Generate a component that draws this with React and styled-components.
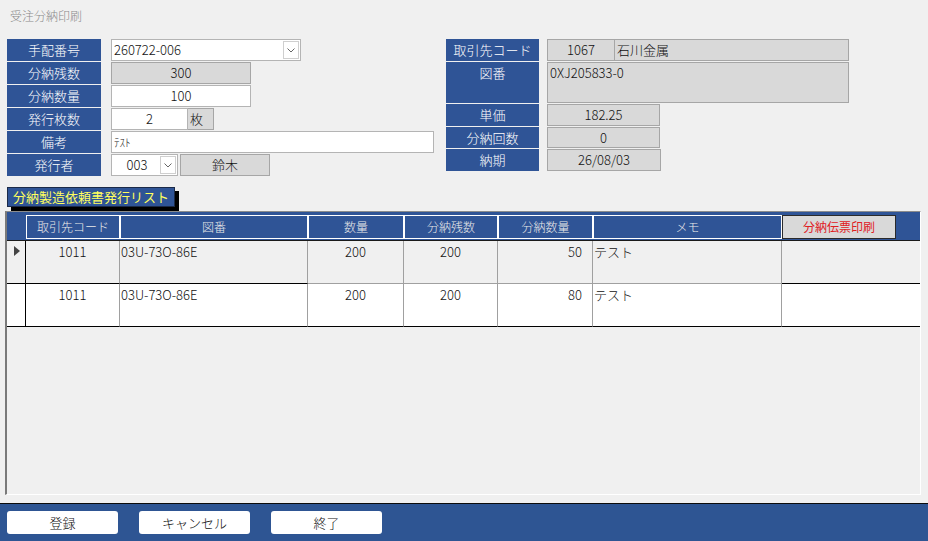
import styled, { createGlobalStyle } from "styled-components";

const GlobalStyle = createGlobalStyle`
  html, body {
    margin: 0;
    padding: 0;
    background: #f0f0f0;
  }
  * {
    box-sizing: border-box;
  }
`;

const BLUE = "#2f5496";

const Page = styled.div`
  width: 928px;
  height: 541px;
  display: flex;
  flex-direction: column;
  background: #f0f0f0;
  font-family: "Noto Sans CJK JP", "Noto Sans", sans-serif;
  font-weight: 300;
  font-size: 13px;
  color: #111;
  overflow: hidden;
`;

const Title = styled.div`
  height: 39px;
  padding: 8px 0 0 10px;
  font-size: 12px;
  line-height: 16px;
  color: #8a8a8a;
`;

const FormArea = styled.div`
  display: flex;
  align-items: flex-start;
  gap: 12px;
  padding-left: 7px;
`;

const FieldList = styled.div`
  display: flex;
  flex-direction: column;
  gap: 1px;
  width: ${(p) => p.$w}px;
`;

const Row = styled.div`
  display: flex;
  height: ${(p) => p.$h || 22}px;
`;

const Label = styled.div`
  width: ${(p) => p.$w || 94}px;
  margin-right: ${(p) => p.$gap || 10}px;
  flex-shrink: 0;
  background: ${BLUE};
  color: #fff;
  text-align: center;
  line-height: 22px;
`;

const Field = styled.div`
  width: ${(p) => p.$w}px;
  margin-left: ${(p) => p.$ml || 0}px;
  height: 100%;
  display: flex;
  align-items: ${(p) => (p.$top ? "flex-start" : "center")};
  justify-content: ${(p) =>
    p.$align === "left" ? "flex-start" : p.$align === "right" ? "flex-end" : "center"};
  padding: 0 2px;
  background: ${(p) => (p.$gray ? "#d9d9d9" : "#fff")};
  border: 1px solid ${(p) => (p.$gray ? "#a6a6a6" : "#b4b4b4")};
  border-left-width: ${(p) => (p.$joined ? 0 : 1)}px;
  font-size: ${(p) => p.$fs || 13}px;
  line-height: 20px;
  white-space: nowrap;
`;

const ComboText = styled.span`
  flex: 1;
  text-align: ${(p) => p.$align || "left"};
`;

const ArrowBox = styled.span`
  width: 16px;
  height: 18px;
  display: flex;
  align-items: center;
  justify-content: center;
  border: 1px solid #cfcfcf;
  background: #fff;
  margin-right: -1px;
`;

const Chevron = () => (
  <svg width="8" height="5" viewBox="0 0 8 5">
    <polyline points="0.5,0.5 4,4 7.5,0.5" fill="none" stroke="#666" strokeWidth="1" />
  </svg>
);

const SectionTag = styled.div`
  align-self: flex-start;
  margin: 11px 0 4px 7px;
  width: 168px;
  height: 20px;
  background: ${BLUE};
  border: 1px solid #1b2a48;
  box-shadow: 4px 4px 0 #000;
  color: #ffff5e;
  font-size: 13px;
  font-weight: 400;
  line-height: 18px;
  text-align: center;
  white-space: nowrap;
`;

const Sheet = styled.div`
  margin-left: 5px;
  width: 916px;
  height: 284px;
  background: #f0f0f0;
  border-top: 1px solid #8c8c8c;
  border-left: 2px solid #7a7a7a;
  border-right: 1px solid #fff;
  border-bottom: 1px solid #fff;
`;

const COLS = "19px 94px 188px 96px 94px 95px 189px 138px";

const HeadBand = styled.div`
  display: grid;
  grid-template-columns: ${COLS};
  height: 29px;
  background: ${BLUE};
  border-bottom: 1px solid #1a1a1a;
`;

const HeadCell = styled.div`
  margin: 3px 0 1px;
  border: 1px solid #fff;
  color: #eaeaea;
  font-size: 12px;
  line-height: 21px;
  text-align: center;
`;

const PrintButton = styled.div`
  margin: 3px 24px 1px 0;
  background: #d9d9d9;
  border: 1px solid #2a2a2a;
  color: #e0201f;
  font-size: 12px;
  font-weight: 400;
  line-height: 21px;
  text-align: center;
`;

const DataRow = styled.div`
  display: grid;
  grid-template-columns: ${COLS};
  height: 43px;
  background: ${(p) => (p.$current ? "#f0f0f0" : "#fff")};
`;

const Cell = styled.div`
  padding: 2px ${(p) => (p.$align === "right" ? "10px" : "1px")} 0 1px;
  text-align: ${(p) => p.$align || "left"};
  line-height: 18px;
  border-right: ${(p) => (p.$last ? "none" : `1px solid ${p.$edge ? "#000" : "#a0a0a0"}`)};
  border-bottom: 1px solid ${(p) => (p.$dark ? "#000" : "#a0a0a0")};
  white-space: nowrap;
`;

const Selector = styled(Cell)`
  position: relative;
`;

const Pointer = styled.span`
  position: absolute;
  left: 7px;
  top: 5px;
  width: 0;
  height: 0;
  border-top: 5px solid transparent;
  border-bottom: 5px solid transparent;
  border-left: 6px solid #444;
`;

const Footer = styled.div`
  margin-top: auto;
  height: 38px;
  display: flex;
  gap: 21px;
  padding: 7px 0 0 7px;
  background: #2e5593;
  border-top: 1px solid #0c0c0c;
`;

const FootButton = styled.button`
  width: 111px;
  height: 23px;
  padding: 0;
  background: #fff;
  border: none;
  border-radius: 3px;
  font-family: inherit;
  font-weight: inherit;
  font-size: 13px;
  line-height: 23px;
  color: #111;
`;

const rows = [
  { code: "1011", zuban: "03U-73O-86E", qty: "200", rest: "200", part: "50", memo: "テスト" },
  { code: "1011", zuban: "03U-73O-86E", qty: "200", rest: "200", part: "80", memo: "テスト" },
];

const App = () => {
  return (
    <>
      <GlobalStyle />
      <Page>
        <Title>受注分納印刷</Title>

        <FormArea>
          <FieldList $w={427}>
            <Row>
              <Label>手配番号</Label>
              <Field $w={190} $align="left">
                <ComboText>260722-006</ComboText>
                <ArrowBox><Chevron /></ArrowBox>
              </Field>
            </Row>
            <Row>
              <Label>分納残数</Label>
              <Field $w={140} $gray>300</Field>
            </Row>
            <Row>
              <Label>分納数量</Label>
              <Field $w={140}>100</Field>
            </Row>
            <Row>
              <Label>発行枚数</Label>
              <Field $w={77}>2</Field>
              <Field $w={26} $gray $joined $align="left">枚</Field>
            </Row>
            <Row>
              <Label>備考</Label>
              <Field $w={323} $align="left" $fs={11}>ﾃｽﾄ</Field>
            </Row>
            <Row>
              <Label>発行者</Label>
              <Field $w={67}>
                <ComboText $align="center">003</ComboText>
                <ArrowBox><Chevron /></ArrowBox>
              </Field>
              <Field $w={90} $ml={2} $gray>鈴木</Field>
            </Row>
          </FieldList>

          <FieldList $w={404}>
            <Row>
              <Label $w={93} $gap={8}>取引先コード</Label>
              <Field $w={68} $gray>1067</Field>
              <Field $w={234} $gray $joined $align="left">石川金属</Field>
            </Row>
            <Row $h={41}>
              <Label $w={93} $gap={8}>図番</Label>
              <Field $w={302} $gray $align="left" $top>0XJ205833-0</Field>
            </Row>
            <Row>
              <Label $w={93} $gap={8}>単価</Label>
              <Field $w={113} $gray>182.25</Field>
            </Row>
            <Row $h={21}>
              <Label $w={93} $gap={8}>分納回数</Label>
              <Field $w={113} $gray>0</Field>
            </Row>
            <Row>
              <Label $w={93} $gap={8}>納期</Label>
              <Field $w={114} $gray>26/08/03</Field>
            </Row>
          </FieldList>
        </FormArea>

        <SectionTag>分納製造依頼書発行リスト</SectionTag>

        <Sheet>
          <HeadBand>
            <div />
            <HeadCell>取引先コード</HeadCell>
            <HeadCell>図番</HeadCell>
            <HeadCell>数量</HeadCell>
            <HeadCell>分納残数</HeadCell>
            <HeadCell>分納数量</HeadCell>
            <HeadCell>メモ</HeadCell>
            <PrintButton>分納伝票印刷</PrintButton>
          </HeadBand>

          {rows.map((r, i) => {
            const current = i === 0;
            const dark = !current;
            return (
              <DataRow key={i} $current={current}>
                <Selector $edge $dark>{current && <Pointer />}</Selector>
                <Cell $align="center" $dark>{r.code}</Cell>
                <Cell $dark>{r.zuban}</Cell>
                <Cell $align="center" $dark={dark}>{r.qty}</Cell>
                <Cell $align="center" $dark={dark}>{r.rest}</Cell>
                <Cell $align="right" $dark={dark}>{r.part}</Cell>
                <Cell $dark={dark}>{r.memo}</Cell>
                <Cell $last $dark />
              </DataRow>
            );
          })}
        </Sheet>

        <Footer>
          <FootButton>登録</FootButton>
          <FootButton>キャンセル</FootButton>
          <FootButton>終了</FootButton>
        </Footer>
      </Page>
    </>
  );
};

export default App;
